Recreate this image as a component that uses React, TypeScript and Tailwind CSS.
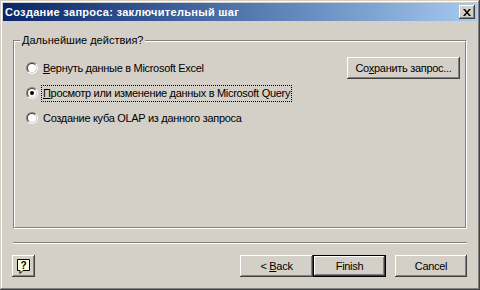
import React from 'react';

// Win2000-style "Query Wizard - Finish" dialog

const FACE = 'bg-[#d4d0c8]';
const RAISED =
  'shadow-[inset_-1px_-1px_0_#404040,inset_1px_1px_0_#ffffff,inset_-2px_-2px_0_#808080,inset_2px_2px_0_#d4d0c8]';

function Radio({ checked }: { checked?: boolean }) {
  return (
    <span className="flex h-[12px] w-[12px] shrink-0 items-center justify-center rounded-full border border-t-[#808080] border-l-[#808080] border-r-white border-b-white">
      <span className="flex h-[10px] w-[10px] items-center justify-center rounded-full border border-t-[#404040] border-l-[#404040] border-r-[#d4d0c8] border-b-[#d4d0c8] bg-white">
        {checked && <span className="h-[4px] w-[4px] rounded-full bg-black" />}
      </span>
    </span>
  );
}

function Btn({
  children,
  className = '',
  isDefault = false,
}: {
  children: React.ReactNode;
  className?: string;
  isDefault?: boolean;
}) {
  if (isDefault) {
    return (
      <div className={`border border-black ${className}`}>
        <div className={`flex h-full w-full items-center justify-center ${FACE} ${RAISED}`}>
          <span>{children}</span>
        </div>
      </div>
    );
  }
  return (
    <div className={`flex items-center justify-center ${FACE} ${RAISED} ${className}`}>
      <span className="whitespace-pre">{children}</span>
    </div>
  );
}

export default function App() {
  return (
    <div
      className={`flex h-[290px] w-[480px] flex-col ${FACE} text-[11px] leading-[13px] tracking-[-0.3px] text-black shadow-[inset_-1px_-1px_0_#404040,inset_1px_1px_0_#d4d0c8,inset_-2px_-2px_0_#808080,inset_2px_2px_0_#ffffff]`}
      style={{ fontFamily: '"Liberation Sans", Arial, sans-serif' }}
    >
      {/* Title bar */}
      <div className="mx-[3px] mt-[3px] flex h-[18px] items-center justify-between bg-gradient-to-r from-[#0a246a] to-[#a6caf0] pl-[2px] pr-[2px]">
        <span className="text-[11px] font-bold tracking-[0.3px] text-white">
          Создание запроса: заключительный шаг
        </span>
        <div className={`flex h-[14px] w-[16px] items-center justify-center ${FACE} ${RAISED}`}>
          <svg width="8" height="7" viewBox="0 0 8 7">
            <path d="M0 0h2l2 2.5L6 0h2L5 3.5 8 7H6L4 4.5 2 7H0l3-3.5z" fill="#000" />
          </svg>
        </div>
      </div>

      {/* Group box */}
      <div className="relative mx-[13px] mt-[19px] h-[189px] border border-t-[#808080] border-l-[#808080] border-r-white border-b-white">
        <span className={`absolute left-[6px] top-[-7px] px-[2px] tracking-[0px] ${FACE}`}>
          Дальнейшие действия?
        </span>
        <div className="flex h-full w-full border border-t-white border-l-white border-r-[#808080] border-b-[#808080] pl-[11px] pr-[5px] pt-[15px]">
          <div className="flex flex-1 flex-col gap-[3px]">
            <div className="flex h-[22px] items-center gap-[3px]">
              <Radio />
              <span className="border border-transparent px-[1px] leading-[15px]">
                <u>В</u>ернуть данные в Microsoft Excel
              </span>
            </div>
            <div className="flex h-[22px] items-center gap-[3px]">
              <Radio checked />
              <span className="border border-dotted border-black px-[1px] leading-[15px]">
                <u>П</u>росмотр или изменение данных в Microsoft Query
              </span>
            </div>
            <div className="flex h-[22px] items-center gap-[3px]">
              <Radio />
              <span className="border border-transparent px-[1px] leading-[15px]">
                Соз<u>д</u>ание куба OLAP из данного запроса
              </span>
            </div>
          </div>
          <Btn className="h-[22px] w-[113px]">
            Со<u>х</u>ранить запрос...
          </Btn>
        </div>
      </div>

      {/* Separator */}
      <div className="mx-[13px] mt-[13px] h-[2px] border-t border-b border-t-[#808080] border-b-white" />

      {/* Bottom buttons */}
      <div className="mx-[13px] mt-[11px] flex items-center">
        <div
          className={`-ml-[1px] flex h-[22px] w-[23px] items-center justify-center ${FACE} ${RAISED}`}
        >
          <svg width="16" height="16" viewBox="0 0 16 16">
            <path
              d="M1.5 1.5h12v11h-6.5l-3 3v-3h-2.5z"
              fill="#ffffe1"
              stroke="#000"
              strokeWidth="1"
            />
            <text
              x="7.5"
              y="11"
              textAnchor="middle"
              fontSize="10"
              fontWeight="bold"
              fontFamily="Liberation Sans, Arial, sans-serif"
              fill="#000"
            >
              ?
            </text>
          </svg>
        </div>
        <div className="ml-auto flex items-center">
          <Btn className="h-[22px] w-[73px]">
            &lt; <u>B</u>ack
          </Btn>
          <Btn isDefault className="h-[22px] w-[73px]">
            Finish
          </Btn>
          <Btn className="ml-[9px] h-[22px] w-[72px]">Cancel</Btn>
        </div>
      </div>
    </div>
  );
}
